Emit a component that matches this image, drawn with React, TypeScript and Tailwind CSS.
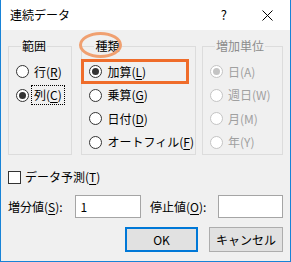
import type { ReactNode } from "react";

function Radio({ checked, disabled }: { checked?: boolean; disabled?: boolean }) {
  return (
    <span
      className={
        "flex h-[13px] w-[13px] shrink-0 items-center justify-center rounded-full border bg-white " +
        (disabled ? "border-[#c4c4c4]" : "border-[#333333]")
      }
    >
      {checked ? (
        <span className={"h-[7px] w-[7px] rounded-full " + (disabled ? "bg-[#c4c4c4]" : "bg-[#333333]")} />
      ) : null}
    </span>
  );
}

function Key({ k }: { k: string }) {
  return <span className="underline decoration-1 underline-offset-[2px]">{k}</span>;
}

function Option({
  label,
  k,
  checked,
  disabled,
  focused,
}: {
  label: string;
  k: string;
  checked?: boolean;
  disabled?: boolean;
  focused?: boolean;
}) {
  return (
    <div className="flex h-[23.5px] items-center gap-[4px] whitespace-nowrap">
      <Radio checked={checked} disabled={disabled} />
      <span
        className={
          "px-[1px] leading-[16px] " +
          (disabled ? "text-[#a0a0a0] " : "text-black ") +
          (focused ? "outline outline-1 outline-dotted outline-black outline-offset-[1px]" : "")
        }
      >
        {label}(
        {disabled ? k : <Key k={k} />})
      </span>
    </div>
  );
}

function Group({
  title,
  width,
  disabled,
  children,
}: {
  title: string;
  width: string;
  disabled?: boolean;
  children: ReactNode;
}) {
  return (
    <fieldset className={"border border-[#dcdcdc] pl-[7px] pt-[6px] " + width}>
      <legend
        className={"ml-[5px] px-[1px] leading-[16px] " + (disabled ? "text-[#8c8c8c]" : "text-black")}
      >
        {title}
      </legend>
      {children}
    </fieldset>
  );
}

export default function App() {
  return (
    <div className="flex h-[262px] w-[291px] flex-col border-x border-b border-[#1883d7] font-['Noto_Sans_CJK_JP',sans-serif] text-[12px] text-black">
      <div className="flex h-[30px] shrink-0 items-center bg-white pl-[9px]">
        <span className="leading-[16px]">連続データ</span>
        <span className="ml-auto mr-[35px] text-[13px] leading-[16px]">?</span>
        <svg width="11" height="11" viewBox="0 0 11 11" className="mr-[17px]">
          <path d="M0.5 0.5 L10.5 10.5 M10.5 0.5 L0.5 10.5" stroke="#000" strokeWidth="1" />
        </svg>
      </div>

      <div className="flex flex-1 flex-col bg-[#f0f0f0] pl-[7px] pr-[7px]">
        <div className="mt-[8px] flex">
          <Group title="範囲" width="w-[66px]">
            <Option label="行" k="R" />
            <Option label="列" k="C" checked focused />
          </Group>

          <div className="relative ml-[9px] flex">
            <Group title="種類" width="w-[111px]">
              <Option label="加算" k="L" checked />
              <Option label="乗算" k="G" />
              <Option label="日付" k="D" />
              <Option label="オートフィル" k="F" />
            </Group>
            {/* annotation marks drawn over the dialog */}
            <div className="pointer-events-none absolute left-[-2px] top-[-6px] h-[26px] w-[43px] rounded-[50%] border-[3px] border-[#f0a070]" />
            <div className="pointer-events-none absolute left-0 top-[21px] h-[25px] w-[108px] border-[3px] border-[#ef6c2a]" />
          </div>

          <Group title="増加単位" width="ml-[6px] w-[83px]" disabled>
            <Option label="日" k="A" checked disabled />
            <Option label="週日" k="W" disabled />
            <Option label="月" k="M" disabled />
            <Option label="年" k="Y" disabled />
          </Group>
        </div>

        <div className="mt-[14px] flex h-[16px] items-center gap-[4px]">
          <span className="h-[13px] w-[13px] border border-[#333333] bg-white" />
          <span className="leading-[16px]">
            データ予測(<Key k="T" />)
          </span>
        </div>

        <div className="mt-[10px] flex h-[23px] items-center">
          <span className="w-[68px] leading-[16px]">
            増分値(<Key k="S" />):
          </span>
          <div className="flex h-[23px] w-[66px] items-center border border-[#a5a5a5] bg-white pl-[4px]">1</div>
          <span className="ml-[9px] w-[69px] leading-[16px]">
            停止値(<Key k="O" />):
          </span>
          <div className="h-[23px] w-[65px] border border-[#a5a5a5] bg-white" />
        </div>

        <div className="mt-[9px] flex justify-end gap-[11px]">
          <button className="h-[25px] w-[73px] border-2 border-[#0078d7] bg-[#e1e1e1] leading-[16px]">OK</button>
          <button className="h-[25px] w-[74px] border border-[#adadad] bg-[#e1e1e1] leading-[16px]">
            キャンセル
          </button>
        </div>
      </div>
    </div>
  );
}
